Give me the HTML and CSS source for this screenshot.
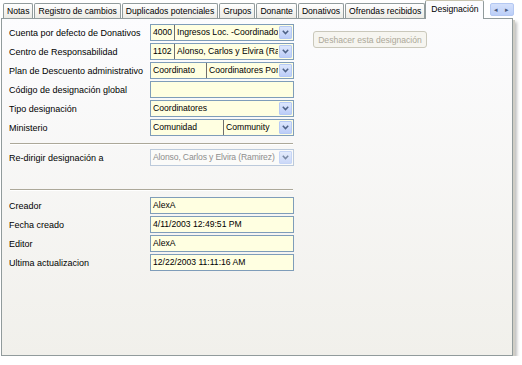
FILE: index.html
```html
<!DOCTYPE html>
<html lang="es">

<head>
    <meta charset="UTF-8">
    <title>Designación</title>
    <link rel="stylesheet" href="styles.css">
</head>

<body>
    <div class="window">
        <div class="tabstrip">
            <div class="tab">Notas</div>
            <div class="tab">Registro de cambios</div>
            <div class="tab">Duplicados potenciales</div>
            <div class="tab">Grupos</div>
            <div class="tab">Donante</div>
            <div class="tab">Donativos</div>
            <div class="tab">Ofrendas recibidos</div>
            <div class="tab active">Designación</div>
            <div class="scroller">
                <span class="arrow">&#9666;</span>
                <span class="arrow">&#9656;</span>
            </div>
        </div>

        <div class="page">
            <div class="top">
                <div class="form">
                    <div class="row">
                        <label>Cuenta por defecto de Donativos</label>
                        <div class="field combo">
                            <span class="cell code">4000</span>
                            <span class="cell">Ingresos Loc. -Coordinado</span>
                            <span class="drop"><svg width="7" height="5" viewBox="0 0 7 5"><path d="M0.8 0.8 L3.5 3.6 L6.2 0.8" /></svg></span>
                        </div>
                    </div>
                    <div class="row">
                        <label>Centro de Responsabilidad</label>
                        <div class="field combo">
                            <span class="cell code">1102</span>
                            <span class="cell">Alonso, Carlos y Elvira (Ramirez)</span>
                            <span class="drop"><svg width="7" height="5" viewBox="0 0 7 5"><path d="M0.8 0.8 L3.5 3.6 L6.2 0.8" /></svg></span>
                        </div>
                    </div>
                    <div class="row">
                        <label>Plan de Descuento administrativo</label>
                        <div class="field combo">
                            <span class="cell code plan">Coordinato</span>
                            <span class="cell">Coordinatores Porcentaje</span>
                            <span class="drop"><svg width="7" height="5" viewBox="0 0 7 5"><path d="M0.8 0.8 L3.5 3.6 L6.2 0.8" /></svg></span>
                        </div>
                    </div>
                    <div class="row">
                        <label>Código de designación global</label>
                        <div class="field"></div>
                    </div>
                    <div class="row">
                        <label>Tipo designación</label>
                        <div class="field combo">
                            <span class="cell">Coordinatores</span>
                            <span class="drop"><svg width="7" height="5" viewBox="0 0 7 5"><path d="M0.8 0.8 L3.5 3.6 L6.2 0.8" /></svg></span>
                        </div>
                    </div>
                    <div class="row">
                        <label>Ministerio</label>
                        <div class="field combo">
                            <span class="cell code ministry">Comunidad</span>
                            <span class="cell">Community</span>
                            <span class="drop"><svg width="7" height="5" viewBox="0 0 7 5"><path d="M0.8 0.8 L3.5 3.6 L6.2 0.8" /></svg></span>
                        </div>
                    </div>
                </div>
                <button class="undo" disabled>Deshacer esta designación</button>
            </div>

            <div class="sep"></div>

            <div class="row">
                <label>Re-dirigir designación a</label>
                <div class="field combo disabled">
                    <span class="cell">Alonso, Carlos y Elvira (Ramirez)</span>
                    <span class="drop"><svg width="7" height="5" viewBox="0 0 7 5"><path d="M0.8 0.8 L3.5 3.6 L6.2 0.8" /></svg></span>
                </div>
            </div>

            <div class="sep wide"></div>

            <div class="row">
                <label>Creador</label>
                <div class="field">AlexA</div>
            </div>
            <div class="row">
                <label>Fecha creado</label>
                <div class="field">4/11/2003 12:49:51 PM</div>
            </div>
            <div class="row">
                <label>Editor</label>
                <div class="field">AlexA</div>
            </div>
            <div class="row">
                <label>Ultima actualizacion</label>
                <div class="field">12/22/2003 11:11:16 AM</div>
            </div>
        </div>
    </div>
</body>

</html>
```

FILE: styles.css
```css
body {
    margin: 0;
    background-color: #fff;
    font-family: "Liberation Sans", Arial, sans-serif;
    font-size: 9px;
    color: #000;
}

.window {
    width: 512px;
    height: 356px;
    margin-left: 1px;
    display: flex;
    flex-direction: column;
}

/* tabs */
.tabstrip {
    display: flex;
    align-items: flex-end;
    height: 18px;
    padding-left: 2px;
    position: relative;
    z-index: 1;
}

.tab {
    height: 15px;
    line-height: 14px;
    padding: 0 3px;
    margin-right: 1px;
    border: 1px solid #919b9c;
    border-bottom: none;
    border-radius: 2px 2px 0 0;
    background: linear-gradient(#ffffff, #ecebe5);
    box-sizing: border-box;
    white-space: nowrap;
    font-size: 8.6px;
}

.tab.active {
    height: 19px;
    margin-bottom: -1px;
    line-height: 16px;
    padding: 0 4px 0 5px;
    margin-left: -1px;
    background: #fcfcfe;
    border-top-color: #c7c3b0;
}

.scroller {
    display: flex;
    align-self: flex-start;
    margin: 3px 0 0 5px;
    height: 11px;
    border: 1px solid #b4c8f2;
    background: linear-gradient(#d4e0fb, #bccff8);
    border-radius: 2px;
}

.arrow {
    width: 11px;
    font-size: 7px;
    line-height: 11px;
    text-align: center;
    color: #4a5a7c;
}

/* page */
.page {
    flex: 1;
    border: 1px solid #919b9c;
    background: linear-gradient(#fcfcfe, #f1f0eb);
    box-shadow: 2px 2px 0 #d0cec6, 4px 4px 3px rgba(0, 0, 0, 0.25);
    padding: 5px 0 0 7px;
}

.top {
    display: flex;
    align-items: flex-start;
}

.row {
    display: flex;
    align-items: center;
    height: 17px;
    margin-bottom: 2px;
}

label {
    width: 141px;
    flex: none;
    white-space: nowrap;
}

.field {
    width: 144px;
    height: 17px;
    box-sizing: border-box;
    border: 1px solid #7f9db9;
    background-color: #ffffe1;
    padding-left: 2px;
    line-height: 15px;
    white-space: nowrap;
    overflow: hidden;
    font-size: 8.6px;
}

.combo {
    display: flex;
    padding-left: 0;
}

.cell {
    padding-left: 2px;
    flex: 1;
    overflow: hidden;
    white-space: nowrap;
}

.cell.code {
    flex: none;
    width: 21px;
    border-right: 1px solid #6e6e6e;
}

.cell.plan {
    width: 53px;
}

.cell.ministry {
    width: 70px;
}

.drop {
    flex: none;
    width: 13px;
    height: 13px;
    margin: 1px;
    box-sizing: border-box;
    border: 1px solid #b5c9f5;
    border-radius: 1px;
    background: linear-gradient(#dce6fc, #bccdf8);
    display: flex;
    align-items: center;
    justify-content: center;
}

.drop path {
    fill: none;
    stroke: #4d6185;
    stroke-width: 1.5;
}

.combo.disabled {
    border-color: #bccadb;
    background-color: #fbfbf9;
    color: #8e8e8e;
    letter-spacing: -0.15px;
}

.combo.disabled .drop {
    opacity: 0.75;
}

.undo {
    margin: 7px 0 0 19px;
    width: 114px;
    height: 17px;
    padding: 0;
    border: 1px solid #cac8bb;
    border-radius: 3px;
    background: #f6f5f0;
    color: #aca899;
    font-family: inherit;
    font-size: 8.6px;
}

.sep {
    width: 283px;
    margin: 5px 0 4px 1px;
    border-top: 1px solid #aca899;
    border-bottom: 1px solid #fff;
}

.sep.wide {
    margin: 23px 0 6px 1px;
}
```
